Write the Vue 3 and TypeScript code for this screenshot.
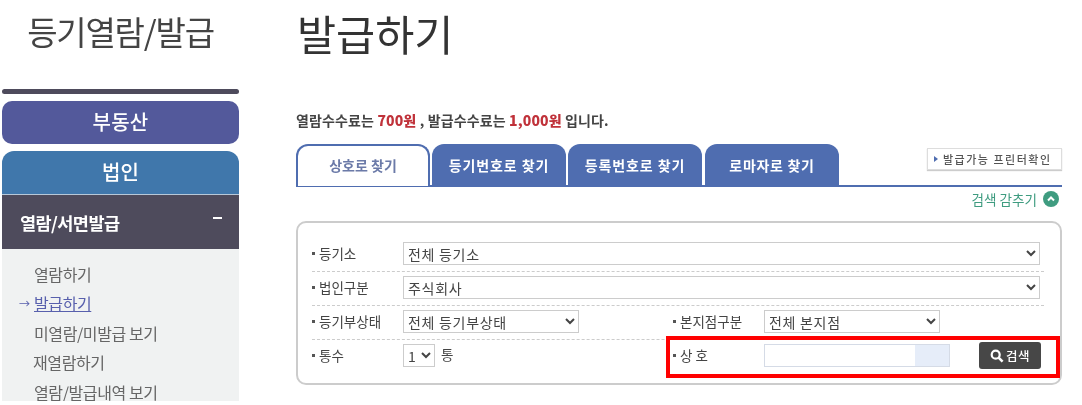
<script setup lang="ts">
const tabs: string[] = ['상호로 찾기', '등기번호로 찾기', '등록번호로 찾기', '로마자로 찾기']
const subMenu: string[] = ['열람하기', '발급하기', '미열람/미발급 보기', '재열람하기', '열람/발급내역 보기']
</script>

<template>
  <div class="page">
    <aside class="side">
      <h2 class="side-title">등기열람/발급</h2>
      <div class="rule"></div>
      <div class="btn-estate">부동산</div>
      <div class="btn-corp">법인</div>
      <div class="group"><span>열람/서면발급</span><i class="minus"></i></div>
      <ul class="sub">
        <li v-for="(m, i) in subMenu" :key="m" :class="{ on: i === 1, shift: i === 3 }">
          <span v-if="i === 1" class="arrow">→</span>{{ m }}
        </li>
      </ul>
    </aside>
    <main class="main">
      <h1 class="title">발급하기</h1>
      <p class="fee">열람수수료는 <b>700원</b> , 발급수수료는 <b>1,000원</b> 입니다.</p>
      <div class="tabbar">
        <div v-for="(t, i) in tabs" :key="t" class="tab" :class="{ active: i === 0 }">{{ t }}</div>
        <button class="printer"><i class="tri"></i>발급가능 프린터확인</button>
      </div>
      <div class="toggle">검색 감추기
        <svg width="16" height="16" viewBox="0 0 16 16"><circle cx="8" cy="8" r="8" fill="#3f9c80"/><path d="M5 9.5 8 6.5 11 9.5" fill="none" stroke="#fff" stroke-width="2"/></svg>
      </div>
      <section class="panel">
        <div class="row">
          <label class="lab">등기소</label>
          <select class="sel full"><option>전체 등기소</option></select>
        </div>
        <div class="row">
          <label class="lab">법인구분</label>
          <select class="sel full"><option>주식회사</option></select>
        </div>
        <div class="row two">
          <div class="cell">
            <label class="lab">등기부상태</label>
            <select class="sel mid"><option>전체 등기부상태</option></select>
          </div>
          <div class="cell">
            <label class="lab">본지점구분</label>
            <select class="sel mid"><option>전체 본지점</option></select>
          </div>
        </div>
        <div class="row two last">
          <div class="cell">
            <label class="lab">통수</label>
            <select class="sel tiny"><option>1</option></select>
            <span class="unit">통</span>
          </div>
          <div class="cell">
            <label class="lab">상 호</label>
            <div class="field"><div class="autofill"></div></div>
            <button class="search">
              <svg width="14" height="14" viewBox="0 0 14 14"><circle cx="5.7" cy="5.7" r="4" fill="none" stroke="#fff" stroke-width="2.2"/><path d="M8.6 8.6 12.6 12.6" stroke="#fff" stroke-width="2.6"/></svg>검색
            </button>
          </div>
        </div>
        <div class="highlight"></div>
      </section>
    </main>
  </div>
</template>

<style>
html, body { margin: 0; background: #fff; overflow: hidden; }
</style>

<style scoped>
.page {
  width: 1082px; height: 401px; overflow: hidden; display: flex; box-sizing: border-box;
  padding-left: 2px; font-family: "Noto Sans CJK KR", "Noto Sans", sans-serif; color: #444;
  filter: blur(0.6px);
}
.side { width: 237px; flex: none; display: flex; flex-direction: column; }
.side > * { flex: none; }
.side-title { margin: 10px 0 0; height: 79px; font-size: 33px; line-height: 42px; font-weight: 400; color: #444; text-align: center; letter-spacing: -1.2px; }
.rule { height: 5px; background: #4e4b5c; border-radius: 3px; }
.btn-estate { margin-top: 7px; height: 43px; line-height: 42px; background: #53599b; color: #fff; border-radius: 10px; text-align: center; font-size: 20px; font-weight: 500; letter-spacing: 0.2px; }
.btn-corp { margin-top: 7px; height: 43px; line-height: 42px; background: #4077ab; color: #fff; border-radius: 12px 12px 0 0; text-align: center; font-size: 20px; font-weight: 500; border-bottom: 1px solid #b7c8d8; }
.group { height: 54px; background: #4e4b5c; color: #fff; font-size: 17.5px; font-weight: 700; display: flex; align-items: center; justify-content: space-between; padding: 0 17px 0 18px; letter-spacing: -0.55px; }
.minus { width: 9px; height: 2px; background: #fff; margin-bottom: 9px; }
.sub { list-style: none; margin: 0; padding: 11px 0 0 32px; height: 152px; box-sizing: border-box; background: #f0f2f2; }
.sub li { height: 29.4px; line-height: 29px; font-size: 16px; color: #666; position: relative; letter-spacing: -0.4px; white-space: nowrap; }
.sub li.on { color: #5860ad; text-decoration: underline; }
.sub li.shift { margin-left: -1px; }
.arrow { position: absolute; left: -15px; font-size: 11px; display: inline-block; }
.main { margin-left: 57px; width: 766px; flex: none; display: flex; flex-direction: column; }
.main > * { flex: none; }
.title { margin: 6px 0 0; height: 104px; font-size: 42.5px; line-height: 54px; font-weight: 400; color: #333; padding-left: 1px; }
.fee { margin: 0; height: 34px; font-size: 14px; line-height: 20px; font-weight: 700; color: #444; letter-spacing: 0.13px; white-space: nowrap; }
.fee b { color: #c0323a; }
.tabbar { height: 43px; display: flex; gap: 2px; align-items: flex-start; border-bottom: 2px solid #4f6db0; box-sizing: border-box; position: relative; }
.tab { width: 134px; height: 41px; line-height: 42px; box-sizing: border-box; background: #4f6db0; color: #fff; font-size: 14px; font-weight: 700; text-align: center; border-radius: 12px 12px 0 0; letter-spacing: 0.9px; }
.tab:nth-child(4) { margin-left: 1px; letter-spacing: 0.7px; }
.tab.active { height: 42px; background: #fff; color: #6b7aa8; border: 2px solid #4f6db0; border-bottom: 0; line-height: 39px; margin-bottom: -1px; letter-spacing: 0; }
.printer { margin: 4px 0 0 auto; width: 135px; height: 22px; padding: 0 0 0 6px; display: flex; align-items: center; gap: 5px; background: #fff; border: 1px solid #ddd; box-shadow: 0 1px 1px #ccc; font: 500 11px "Noto Sans CJK KR", sans-serif; color: #555; white-space: nowrap; letter-spacing: 1.5px; }
.tri { width: 0; height: 0; border-left: 4px solid #4f6db0; border-top: 3px solid transparent; border-bottom: 3px solid transparent; }
.toggle { height: 30px; margin-top: 4px; padding-right: 3px; display: flex; justify-content: flex-end; align-items: flex-start; gap: 6px; font-size: 13.6px; line-height: 16px; color: #3f9c80; }
.panel { position: relative; height: 164px; box-sizing: border-box; border: 2px solid #ccc; border-radius: 10px; padding: 15px 16px 0 14px; }
.row { height: 34px; display: flex; align-items: flex-start; border-bottom: 1px dashed #ccc; box-sizing: border-box; padding-top: 4px; }
.row.last { border-bottom: 0; }
.cell { display: flex; align-items: flex-start; width: 360px; }
.cell + .cell { flex: 1; padding-left: 1px; }
.lab { width: 91px; flex: none; font-size: 13.5px; line-height: 22px; color: #444; position: relative; padding-left: 7px; box-sizing: border-box; white-space: nowrap; }
.lab::before { content: ""; position: absolute; left: 0; top: 10px; width: 3px; height: 3px; background: #555; }
.sel { height: 23px; font: 400 14px "Noto Sans CJK KR", sans-serif; color: #444; background: #fff; border: 1px solid #ccc; padding: 0; letter-spacing: 0.7px; }
.full { width: 637px; }
.mid { width: 176px; }
.tiny { width: 32px; }
.unit { margin-left: 6px; font-size: 13.5px; line-height: 20px; color: #444; }
.field { width: 186px; height: 23px; background: #e6edf9; border: 1px solid #d5dbe6; box-sizing: border-box; }
.autofill { width: 150px; height: 100%; background: #fff; }
.search { margin-left: 29px; margin-top: -2px; width: 62px; height: 27px; display: flex; align-items: center; justify-content: center; gap: 2px; background: #474747; color: #fff; border: 0; border-radius: 3px; padding: 0; font: 500 12.5px "Noto Sans CJK KR", sans-serif; letter-spacing: 0.5px; }
.highlight { position: absolute; left: 368px; top: 113px; width: 394px; height: 42px; border: 4px solid #f00; box-sizing: border-box; pointer-events: none; }
</style>
